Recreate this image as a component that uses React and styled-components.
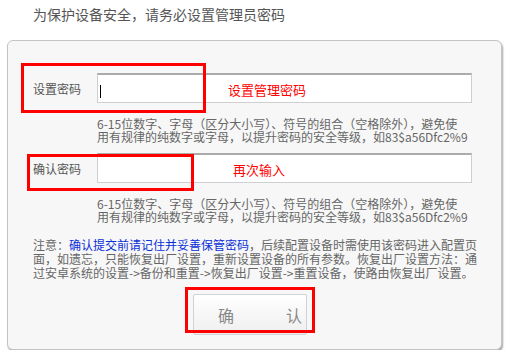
import React from 'react'
import styled, { createGlobalStyle } from 'styled-components'

const GlobalStyle = createGlobalStyle`
  body {
    margin: 0;
    background: #fff;
    font-family: "Noto Sans CJK SC", "Liberation Sans", sans-serif;
  }
`

const Intro = styled.div`
  padding: 5px 0 0 33px;
  height: 40px;
  box-sizing: border-box;
  font-size: 14px;
  line-height: 18px;
  color: #555;
`

const Card = styled.div`
  box-sizing: border-box;
  display: flex;
  flex-direction: column;
  align-items: flex-start;
  width: 495px;
  height: 310px;
  margin-left: 7px;
  padding: 32px 0 0 25px;
  background: #f7f7f7;
  border: 1px solid #c4c4c4;
  border-radius: 6px;
  box-shadow: 1px 2px 2px rgba(0, 0, 0, 0.35);
`

const Field = styled.div`
  position: relative;
  display: flex;
  align-items: center;
  height: 30px;
  margin-top: ${p => p.$gap || 0}px;
`

const Label = styled.div`
  width: 64px;
  font-size: 12px;
  color: #555;
`

const Input = styled.input`
  box-sizing: border-box;
  width: 375px;
  height: 30px;
  padding: 0 6px;
  border: 1px solid #cfcfcf;
  border-top: 2px solid #ababab;
  background: #fff;
  outline: none;
  font-size: 12px;
`

const Caret = styled.span`
  position: absolute;
  left: 67px;
  top: 12px;
  width: 1px;
  height: 13px;
  background: #000;
`

const Tip = styled.span`
  position: absolute;
  left: ${p => p.$left}px;
  top: 7px;
  font-size: 13px;
  color: #f00;
`

const Mark = styled.div`
  position: absolute;
  left: ${p => p.$x}px;
  top: ${p => p.$y}px;
  width: ${p => p.$w}px;
  height: ${p => p.$h}px;
  box-sizing: border-box;
  border: 3px solid #f00;
  pointer-events: none;
`

const Hint = styled.div`
  width: 385px;
  margin: 14px 0 0 64px;
  font-size: 12px;
  line-height: 13px;
  color: #666;
  white-space: nowrap;
`

const Note = styled.p`
  width: 446px;
  margin: 15px 0 0;
  font-size: 12px;
  line-height: 14px;
  color: #666;
`

const Link = styled.a`
  color: #0a2fd8;
  text-decoration: none;
`

const ButtonWrap = styled.div`
  position: relative;
  margin: 14px 0 0 160px;
`

const Button = styled.button`
  box-sizing: border-box;
  display: flex;
  justify-content: space-between;
  align-items: center;
  width: 114px;
  height: 41px;
  padding: 0 4px 0 24px;
  border: 1px solid #d2d2d2;
  border-radius: 2px;
  background: linear-gradient(#ffffff, #efefef);
  font-family: "Noto Sans CJK SC", sans-serif;
  font-size: 16px;
  color: #888;
  span {
    width: 16px;
  }
`

const Rules = () => (
  <Hint>
    6-15位数字、字母（区分大小写）、符号的组合（空格除外），避免使
    <br />
    用有规律的纯数字或字母，以提升密码的安全等级，如83$a56Dfc2%9
  </Hint>
)

export default function App() {
  return (
    <>
      <GlobalStyle />
      <Intro>为保护设备安全，请务必设置管理员密码</Intro>
      <Card>
        <Field>
          <Label>设置密码</Label>
          <Input type="password" />
          <Caret />
          <Tip $left={195}>设置管理密码</Tip>
          <Mark $x={-12} $y={-10} $w={185} $h={50} />
        </Field>
        <Rules />
        <Field $gap={10}>
          <Label>确认密码</Label>
          <Input type="password" />
          <Tip $left={200}>再次输入</Tip>
          <Mark $x={-6} $y={1} $w={167} $h={37} />
        </Field>
        <Rules />
        <Note>
          注意：<Link>确认提交前请记住并妥善保管密码</Link>，后续配置设备时需使用该密码进入配置页面，如遗忘，只能恢复出厂设置，重新设置设备的所有参数。恢复出厂设置方法：通过安卓系统的设置-&gt;备份和重置-&gt;恢复出厂设置-&gt;重置设备，使路由恢复出厂设置。
        </Note>
        <ButtonWrap>
          <Button>
            <span>确</span>
            <span>认</span>
          </Button>
          <Mark $x={-8} $y={-7} $w={130} $h={46} />
        </ButtonWrap>
      </Card>
    </>
  )
}
